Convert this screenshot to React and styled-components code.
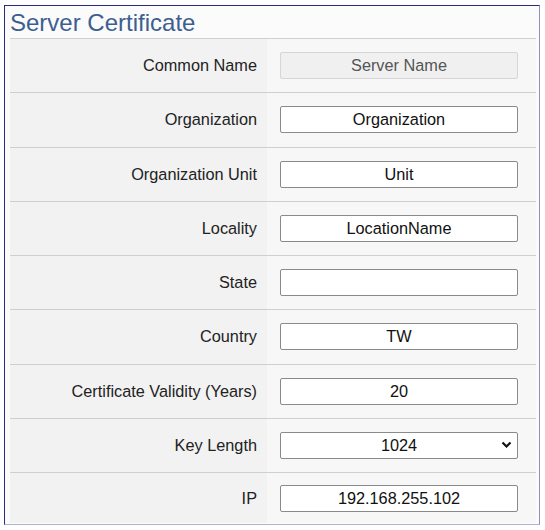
import React from 'react'
import styled, { createGlobalStyle } from 'styled-components'

const GlobalStyle = createGlobalStyle`
    html, body {
        margin: 0;
        padding: 0;
        background: #ffffff;
        font-family: "Liberation Sans", Arial, sans-serif;
    }
    * { box-sizing: border-box; }
`

const Panel = styled.div`
    margin: 5px 0 0 4px;
    width: 536px;
    background-color: #fbfbfb;
    border: 1px solid #2b2b7b;
    border-right-color: #9490c4;
    border-bottom-color: #b4b0d4;
    padding: 0 3px 1px 5px;
`

const Title = styled.h2`
    margin: 0;
    height: 32px;
    line-height: 33px;
    font-size: 24px;
    font-weight: 400;
    color: #3d5f90;
`

const Table = styled.div`
    display: flex;
    flex-direction: column;
`

const Row = styled.div`
    display: grid;
    grid-template-columns: 257px 1fr;
    height: 54.25px;
    border-top: 1px solid #cfcfcf;
    &:last-child {
        height: 51px;
    }
`

const Label = styled.div`
    background-color: #f2f2f2;
    display: flex;
    align-items: center;
    justify-content: flex-end;
    padding-right: 10px;
    font-size: 16.3px;
    color: #222;
`

const Cell = styled.div`
    background-color: #f7f7f7;
    display: flex;
    align-items: center;
    padding-left: 13px;
`

const Field = styled.input`
    width: 238px;
    height: 27px;
    border: 1px solid ${p => (p.disabled ? '#d6d6d6' : '#8a8a8a')};
    border-radius: 2px;
    background-color: ${p => (p.disabled ? '#f0f0f0' : '#ffffff')};
    color: ${p => (p.disabled ? '#555' : '#111')};
    font-family: "Liberation Sans", Arial, sans-serif;
    font-size: 16.3px;
    text-align: center;
    padding: 0 4px;
    outline: none;
`

const SelectWrap = styled.div`
    position: relative;
    width: 238px;
    height: 27px;
`

const Select = styled.select`
    appearance: none;
    width: 100%;
    height: 100%;
    border: 1px solid #8a8a8a;
    border-radius: 2px;
    background-color: #ffffff;
    color: #111;
    font-family: "Liberation Sans", Arial, sans-serif;
    font-size: 16.3px;
    text-align: center;
    text-align-last: center;
    padding: 0 4px;
    outline: none;
`

const Chevron = styled.svg`
    position: absolute;
    right: 6px;
    top: 9px;
    pointer-events: none;
`

const rows = [
    { label: 'Common Name', value: 'Server Name', disabled: true },
    { label: 'Organization', value: 'Organization' },
    { label: 'Organization Unit', value: 'Unit' },
    { label: 'Locality', value: 'LocationName' },
    { label: 'State', value: '' },
    { label: 'Country', value: 'TW' },
    { label: 'Certificate Validity (Years)', value: '20' },
    { label: 'Key Length', select: ['1024', '2048'] },
    { label: 'IP', value: '192.168.255.102' },
]

export default function App() {
    return (
        <>
            <GlobalStyle />
            <Panel>
                <Title>Server Certificate</Title>
                <Table>
                    {rows.map(r => (
                        <Row key={r.label}>
                            <Label>{r.label}</Label>
                            <Cell>
                                {r.select ? (
                                    <SelectWrap>
                                        <Select defaultValue={r.select[0]}>
                                            {r.select.map(o => <option key={o}>{o}</option>)}
                                        </Select>
                                        <Chevron width="11" height="8" viewBox="0 0 11 8">
                                            <path d="M1.5 1.5 L5.5 5.5 L9.5 1.5" fill="none" stroke="#111" strokeWidth="2.2" />
                                        </Chevron>
                                    </SelectWrap>
                                ) : (
                                    <Field defaultValue={r.value} disabled={r.disabled} readOnly={r.disabled} />
                                )}
                            </Cell>
                        </Row>
                    ))}
                </Table>
            </Panel>
        </>
    )
}
